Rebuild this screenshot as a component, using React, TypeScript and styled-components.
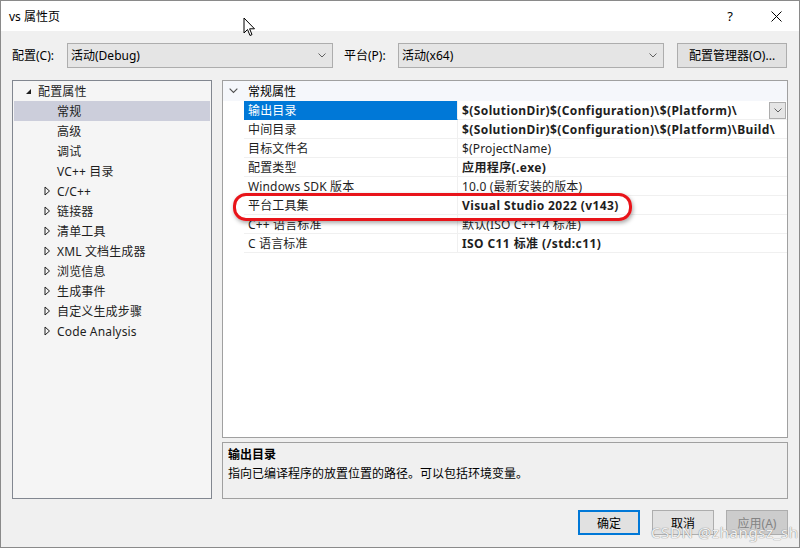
import React from "react";
import styled, { createGlobalStyle } from "styled-components";

const FONT = `"Noto Sans", "Noto Sans CJK SC", sans-serif`;

const Global = createGlobalStyle`
  html, body { margin: 0; padding: 0; background: #ffffff; }
  body { font-family: ${FONT}; font-size: 12px; color: #000; }
  * { box-sizing: border-box; }
`;

const Window = styled.div`
  position: relative;
  width: 800px;
  height: 548px;
  border: 1px solid #8a8a8a;
  background: #f0f0f0;
  display: flex;
  flex-direction: column;
  overflow: hidden;
`;

const TitleBar = styled.div`
  height: 30px;
  background: #ffffff;
  display: flex;
  align-items: center;
  padding-left: 8px;
  font-size: 12px;
  flex-shrink: 0;
`;

const Title = styled.div`
  flex: 1;
`;

const TitleBtn = styled.div<{ $w: number }>`
  width: ${(p) => p.$w}px;
  height: 30px;
  display: flex;
  align-items: center;
  justify-content: center;
  color: #000;
  font-size: 13px;
`;

const Toolbar = styled.div`
  display: flex;
  align-items: center;
  padding: 12px 0 0 11px;
  box-sizing: content-box;
  height: 24px;
  flex-shrink: 0;
`;

const Label = styled.div<{ $w: number; $pad?: number }>`
  width: ${(p) => p.$w}px;
  padding-left: ${(p) => p.$pad ?? 0}px;
  font-size: 12px;
  flex-shrink: 0;
`;

const Combo = styled.div<{ $w: number }>`
  width: ${(p) => p.$w}px;
  height: 25px;
  border: 1px solid #adadad;
  background: #e5e5e5;
  display: flex;
  align-items: center;
  padding: 0 6px 0 3px;
  justify-content: space-between;
  flex-shrink: 0;
`;

const Spacer = styled.div<{ $w: number }>`
  width: ${(p) => p.$w}px;
  flex-shrink: 0;
`;

const PushButton = styled.div<{ $w: number; $default?: boolean; $disabled?: boolean }>`
  width: ${(p) => p.$w}px;
  height: 25px;
  border: ${(p) => (p.$default ? "2px solid #0078d7" : "1px solid #adadad")};
  background: ${(p) => (p.$disabled ? "#cccccc" : "#e1e1e1")};
  color: ${(p) => (p.$disabled ? "#838383" : "#000")};
  display: flex;
  align-items: center;
  justify-content: center;
  font-size: 12px;
  flex-shrink: 0;
`;

const Main = styled.div`
  display: flex;
  padding: 13px 0 0 11px;
  gap: 10px;
  height: 420px;
  box-sizing: content-box;
  flex-shrink: 0;
`;

const Tree = styled.div`
  width: 200px;
  height: 419px;
  border: 1px solid #828790;
  background: #f5f5f5;
  padding: 0 1px;
  display: flex;
  flex-direction: column;
`;

const TreeRow = styled.div<{ $sel?: boolean; $indent: number }>`
  height: 20px;
  flex-shrink: 0;
  display: flex;
  align-items: center;
  padding-left: ${(p) => p.$indent}px;
  background: ${(p) => (p.$sel ? "#cccedb" : "transparent")};
  color: #1e1e1e;
  letter-spacing: 0.15px;
`;

const Arrow = styled.span`
  width: 13px;
  display: inline-flex;
  align-items: center;
`;

const RightCol = styled.div`
  width: 566px;
  display: flex;
  flex-direction: column;
  gap: 4px;
`;

const Grid = styled.div`
  height: 358px;
  border: 1px solid #a0a0a0;
  background: #ffffff;
  display: flex;
  flex-direction: column;
`;

const GroupRow = styled.div`
  height: 20px;
  display: flex;
  align-items: center;
  background: #f5f7fb;
`;

const GroupTitle = styled.span`
  padding-left: 4px;
`;

const Gutter = styled.div`
  width: 21px;
  height: 100%;
  display: flex;
  align-items: center;
  justify-content: center;
  flex-shrink: 0;
`;

const PropRow = styled.div`
  height: 19px;
  display: flex;
  align-items: stretch;
`;

const NameCell = styled.div<{ $sel?: boolean }>`
  width: 214px;
  flex-shrink: 0;
  display: flex;
  align-items: center;
  padding-left: 4px;
  background: ${(p) => (p.$sel ? "#0078d7" : "#fff")};
  color: ${(p) => (p.$sel ? "#fff" : "#1e1e1e")};
  border-bottom: 1px solid ${(p) => (p.$sel ? "#0078d7" : "#f0f0f0")};
  border-right: 1px solid #f0f0f0;
  white-space: nowrap;
  overflow: hidden;
  letter-spacing: 0.15px;
`;

const ValueCell = styled.div<{ $bold?: boolean }>`
  flex: 1;
  display: flex;
  align-items: center;
  padding-left: 4px;
  font-weight: ${(p) => (p.$bold ? 700 : 400)};
  letter-spacing: ${(p) => (p.$bold ? "0.4px" : "0.15px")};
  border-bottom: 1px solid #f0f0f0;
  white-space: nowrap;
  overflow: hidden;
  color: #1e1e1e;
  position: relative;
`;

const DropBtn = styled.div`
  position: absolute;
  right: 1px;
  top: 1px;
  width: 17px;
  height: 17px;
  border: 1px solid #adadad;
  background: #e5e5e5;
  display: flex;
  align-items: center;
  justify-content: center;
`;

const Desc = styled.div`
  height: 57px;
  border: 1px solid #a0a0a0;
  background: #f0f0f0;
  padding: 3px 5px;
  display: flex;
  flex-direction: column;
  gap: 1px;
`;

const DescTitle = styled.div`
  font-weight: 700;
  line-height: 18px;
`;

const DescText = styled.div`
  line-height: 18px;
`;

const Footer = styled.div`
  display: flex;
  justify-content: flex-end;
  gap: 12px;
  padding: 10px 11px 0 0;
`;

const Highlight = styled.div`
  position: absolute;
  left: 232px;
  top: 192px;
  width: 399px;
  height: 28px;
  border: 3px solid #e8141a;
  border-radius: 13px;
  box-shadow: 1px 2px 4px rgba(0, 0, 0, 0.35);
  pointer-events: none;
`;

const Watermark = styled.div`
  position: absolute;
  left: 650px;
  top: 521px;
  font-size: 15px;
  line-height: 20px;
  color: rgba(255, 255, 255, 0.9);
  text-shadow: 0 0 1px #8c8c8c, 0 0 1px #8c8c8c;
  letter-spacing: 0.6px;
  pointer-events: none;
  font-family: "Noto Sans", sans-serif;
  white-space: nowrap;
`;

const Cursor = styled.svg`
  position: absolute;
  left: 242px;
  top: 16px;
`;

const Chevron = ({ size = 8, color = "#606060" }: { size?: number; color?: string }) => (
  <svg width={size} height={size / 2 + 1} viewBox="0 0 8 5">
    <path d="M0.5 0.5 L4 4 L7.5 0.5" fill="none" stroke={color} strokeWidth="1" />
  </svg>
);

const Expanded = () => (
  <svg width="7" height="7" viewBox="0 0 7 7">
    <path d="M6 1 L6 6 L1 6 Z" fill="#1e1e1e" />
  </svg>
);

const Collapsed = () => (
  <svg width="7" height="10" viewBox="0 0 7 10">
    <path d="M1 1 L5.5 5 L1 9 Z" fill="none" stroke="#1e1e1e" strokeWidth="1" />
  </svg>
);

const tree: { t: string; lvl: number; kind: "exp" | "col" | "none"; sel?: boolean }[] = [
  { t: "配置属性", lvl: 0, kind: "exp" },
  { t: "常规", lvl: 1, kind: "none", sel: true },
  { t: "高级", lvl: 1, kind: "none" },
  { t: "调试", lvl: 1, kind: "none" },
  { t: "VC++ 目录", lvl: 1, kind: "none" },
  { t: "C/C++", lvl: 1, kind: "col" },
  { t: "链接器", lvl: 1, kind: "col" },
  { t: "清单工具", lvl: 1, kind: "col" },
  { t: "XML 文档生成器", lvl: 1, kind: "col" },
  { t: "浏览信息", lvl: 1, kind: "col" },
  { t: "生成事件", lvl: 1, kind: "col" },
  { t: "自定义生成步骤", lvl: 1, kind: "col" },
  { t: "Code Analysis", lvl: 1, kind: "col" },
];

const props: { n: string; v: string; bold?: boolean; sel?: boolean }[] = [
  { n: "输出目录", v: "$(SolutionDir)$(Configuration)\\$(Platform)\\", bold: true, sel: true },
  { n: "中间目录", v: "$(SolutionDir)$(Configuration)\\$(Platform)\\Build\\", bold: true },
  { n: "目标文件名", v: "$(ProjectName)" },
  { n: "配置类型", v: "应用程序(.exe)", bold: true },
  { n: "Windows SDK 版本", v: "10.0 (最新安装的版本)" },
  { n: "平台工具集", v: "Visual Studio 2022 (v143)", bold: true },
  { n: "C++ 语言标准", v: "默认(ISO C++14 标准)" },
  { n: "C 语言标准", v: "ISO C11 标准 (/std:c11)", bold: true },
];

export default function App() {
  return (
    <>
      <Global />
      <Window>
        <TitleBar>
          <Title>vs 属性页</Title>
          <TitleBtn $w={46}>?</TitleBtn>
          <TitleBtn $w={46}>
            <svg width="11" height="11" viewBox="0 0 11 11">
              <path d="M0.5 0.5 L10.5 10.5 M10.5 0.5 L0.5 10.5" stroke="#000" strokeWidth="1" />
            </svg>
          </TitleBtn>
        </TitleBar>
        <Toolbar>
          <Label $w={55}>配置(C):</Label>
          <Combo $w={266}>
            <span>活动(Debug)</span>
            <Chevron />
          </Combo>
          <Label $w={65} $pad={11}>平台(P):</Label>
          <Combo $w={266}>
            <span>活动(x64)</span>
            <Chevron />
          </Combo>
          <Spacer $w={13} />
          <PushButton $w={110}>配置管理器(O)...</PushButton>
        </Toolbar>
        <Main>
          <Tree>
            {tree.map((r) => (
              <TreeRow key={r.t} $sel={r.sel} $indent={r.lvl === 0 ? 11 : r.kind === "none" ? 43 : 30}>
                {r.kind !== "none" && (
                  <Arrow>{r.kind === "exp" ? <Expanded /> : <Collapsed />}</Arrow>
                )}
                <span>{r.t}</span>
              </TreeRow>
            ))}
          </Tree>
          <RightCol>
            <Grid>
              <GroupRow>
                <Gutter>
                  <Chevron size={9} color="#505050" />
                </Gutter>
                <GroupTitle>常规属性</GroupTitle>
              </GroupRow>
              {props.map((p) => (
                <PropRow key={p.n}>
                  <Gutter />
                  <NameCell $sel={p.sel}>{p.n}</NameCell>
                  <ValueCell $bold={p.bold}>
                    {p.v}
                    {p.sel && (
                      <DropBtn>
                        <Chevron />
                      </DropBtn>
                    )}
                  </ValueCell>
                </PropRow>
              ))}
            </Grid>
            <Desc>
              <DescTitle>输出目录</DescTitle>
              <DescText>指向已编译程序的放置位置的路径。可以包括环境变量。</DescText>
            </Desc>
          </RightCol>
        </Main>
        <Footer>
          <PushButton $w={62} $default>确定</PushButton>
          <PushButton $w={62}>取消</PushButton>
          <PushButton $w={62} $disabled>应用(A)</PushButton>
        </Footer>
        <Highlight />
        <Watermark>CSDN @zhangsz_sh</Watermark>
        <Cursor width="13" height="20" viewBox="0 0 13 20">
          <path d="M1 1 L1 16 L4.5 12.5 L7 18.5 L9 17.6 L6.6 11.8 L11.5 11.8 Z" fill="#fff" stroke="#000" strokeWidth="1" strokeLinejoin="round" />
        </Cursor>
      </Window>
    </>
  );
}
